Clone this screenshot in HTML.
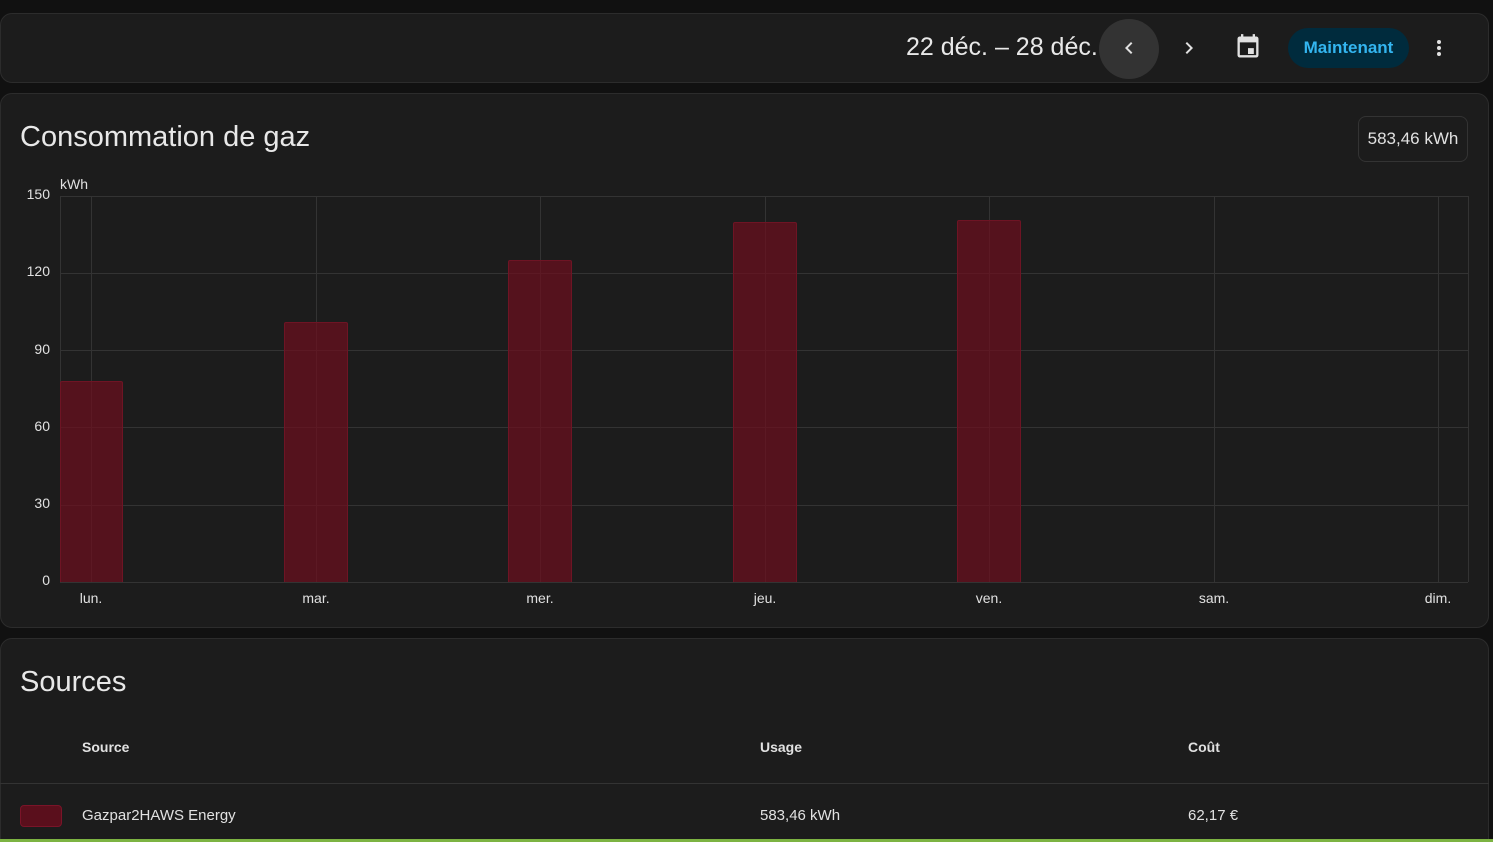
<!DOCTYPE html><html><head><meta charset="utf-8"><style>
html,body{margin:0;width:1493px;height:842px;overflow:hidden}
body{background:#111;font-family:"Liberation Sans",sans-serif;color:#e1e1e1;position:relative}
.card{position:absolute;left:0;width:1489px;background:#1c1c1c;border:1px solid #2c2c2c;border-radius:12px;box-sizing:border-box}
.abs{position:absolute}
.yl{position:absolute;left:0;width:50px;text-align:right;font-size:14px;color:#e1e1e1}
.xl{position:absolute;top:590px;font-size:14px;width:80px;margin-left:-40px;text-align:center}
.bar{position:absolute;background:rgba(110,14,30,0.7);border:1px solid #6e1424;border-bottom:none;border-radius:2px 2px 0 0;box-sizing:border-box}
</style></head><body>
<div class="card" style="top:13px;height:70px"></div>
<div class="abs" style="left:906px;top:33px;font-size:25px;color:#e8e8e8">22 déc. – 28 déc.</div>
<div class="abs" style="left:1099px;top:19px;width:60px;height:60px;border-radius:50%;background:#333"></div>
<svg class="abs" style="left:1117px;top:36px" width="24" height="24" viewBox="0 0 24 24"><path d="M15.4 16.6 10.8 12l4.6-4.6L14 6l-6 6 6 6z" fill="#e1e1e1"/></svg>
<svg class="abs" style="left:1177px;top:36px" width="24" height="24" viewBox="0 0 24 24"><path d="M8.6 16.6 13.2 12 8.6 7.4 10 6l6 6-6 6z" fill="#e1e1e1"/></svg>
<svg class="abs" style="left:1234px;top:33px" width="28" height="28" viewBox="0 0 24 24"><path d="M19 19H5V8h14m0-5h-1V1h-2v2H8V1H6v2H5a2 2 0 0 0-2 2v14a2 2 0 0 0 2 2h14a2 2 0 0 0 2-2V5a2 2 0 0 0-2-2m-2 10h-5v5h5z" fill="#e1e1e1"/></svg>
<div class="abs" style="left:1288px;top:28px;width:121px;height:40px;border-radius:20px;background:#002b3d;color:#33b5f0;font-size:17px;font-weight:bold;line-height:40px;text-align:center">Maintenant</div>
<svg class="abs" style="left:1427px;top:36px" width="24" height="24" viewBox="0 0 24 24"><path d="M12 16a2 2 0 1 1 0 4 2 2 0 0 1 0-4m0-6a2 2 0 1 1 0 4 2 2 0 0 1 0-4m0-6a2 2 0 1 1 0 4 2 2 0 0 1 0-4" fill="#e1e1e1"/></svg>

<div class="card" style="top:93px;height:535px"></div>
<div class="abs" style="left:20px;top:121px;font-size:29px;color:#e8e8e8">Consommation de gaz</div>
<div class="abs" style="left:1358px;top:116px;width:110px;height:46px;border:1px solid #333;border-radius:8px;box-sizing:border-box;font-size:17px;line-height:44px;text-align:center">583,46 kWh</div>
<div class="abs" style="left:60px;top:176px;font-size:14px">kWh</div>
<svg class="abs" style="left:0;top:0" width="1493" height="842">
<g stroke="#333" stroke-width="1">
<line x1="60" x2="1468" y1="196.5" y2="196.5"/><line x1="60" x2="1468" y1="273.5" y2="273.5"/><line x1="60" x2="1468" y1="350.5" y2="350.5"/><line x1="60" x2="1468" y1="427.5" y2="427.5"/><line x1="60" x2="1468" y1="505.5" y2="505.5"/><line x1="60" x2="1468" y1="582.5" y2="582.5"/>
<line x1="60.5" x2="60.5" y1="196" y2="582"/><line x1="1468.5" x2="1468.5" y1="196" y2="582"/>
<line x1="91.5" x2="91.5" y1="196" y2="582"/><line x1="316.5" x2="316.5" y1="196" y2="582"/><line x1="540.5" x2="540.5" y1="196" y2="582"/><line x1="765.5" x2="765.5" y1="196" y2="582"/><line x1="989.5" x2="989.5" y1="196" y2="582"/><line x1="1214.5" x2="1214.5" y1="196" y2="582"/><line x1="1438.5" x2="1438.5" y1="196" y2="582"/>
</g></svg>
<div class="bar" style="left:60px;top:381px;width:63px;height:201px"></div>
<div class="bar" style="left:284px;top:322px;width:64px;height:260px"></div>
<div class="bar" style="left:508px;top:260px;width:64px;height:322px"></div>
<div class="bar" style="left:733px;top:222px;width:64px;height:360px"></div>
<div class="bar" style="left:957px;top:220px;width:64px;height:362px"></div>
<div class="yl" style="top:186px">150</div><div class="yl" style="top:263px">120</div><div class="yl" style="top:341px">90</div><div class="yl" style="top:418px">60</div><div class="yl" style="top:495px">30</div><div class="yl" style="top:572px">0</div>
<div class="xl" style="left:91px">lun.</div><div class="xl" style="left:316px">mar.</div><div class="xl" style="left:540px">mer.</div><div class="xl" style="left:765px">jeu.</div><div class="xl" style="left:989px">ven.</div><div class="xl" style="left:1214px">sam.</div><div class="xl" style="left:1438px">dim.</div>

<div class="card" style="top:638px;height:204px;border-bottom-left-radius:0;border-bottom-right-radius:0"></div>
<div class="abs" style="left:20px;top:666px;font-size:29px;color:#e8e8e8">Sources</div>
<div class="abs" style="left:82px;top:739px;font-size:14px;font-weight:bold">Source</div>
<div class="abs" style="left:760px;top:739px;font-size:14px;font-weight:bold">Usage</div>
<div class="abs" style="left:1188px;top:739px;font-size:14px;font-weight:bold">Coût</div>
<div class="abs" style="left:0;top:783px;width:1489px;height:1px;background:#333"></div>
<div class="abs" style="left:20px;top:805px;width:42px;height:22px;background:#5a0f1c;border:1px solid #7a1428;border-radius:4px;box-sizing:border-box"></div>
<div class="abs" style="left:82px;top:807px;font-size:15px">Gazpar2HAWS Energy</div>
<div class="abs" style="left:760px;top:807px;font-size:15px">583,46 kWh</div>
<div class="abs" style="left:1188px;top:807px;font-size:15px">62,17 €</div>
<div class="abs" style="left:0;top:839px;width:1493px;height:3px;background:#7cb342"></div>
</body></html>
